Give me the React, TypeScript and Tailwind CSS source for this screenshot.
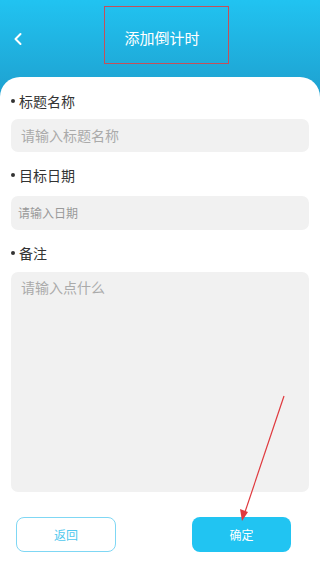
import { ChevronLeft } from 'lucide-react';

const font = { fontFamily: '"Noto Sans CJK SC", "Noto Sans", sans-serif' };

function Label({ text }: { text: string }) {
  return (
    <div className="flex items-center text-[14px] leading-5 text-[#333]">
      <span className="w-[4px] h-[4px] rounded-full bg-[#333] mr-[4px]" />
      {text}
    </div>
  );
}

export default function App() {
  return (
    <div className="relative w-[320px] h-[568px] bg-white overflow-hidden" style={font}>
      {/* header */}
      <div className="h-[100px] bg-gradient-to-b from-[#21c3f1] to-[#1e9fce]">
        <div className="relative flex items-center justify-center h-[80px] pb-[3px]">
          <ChevronLeft className="absolute left-[8px] top-[29px] w-[20px] h-[20px] text-white" strokeWidth={2.4} />
          <span className="text-white text-[15px] pl-[4px]">添加倒计时</span>
        </div>
      </div>

      {/* card */}
      <div className="absolute left-0 right-0 top-[77px] bottom-0 bg-white rounded-t-[20px] px-[11px] pt-[14px]">
        <Label text="标题名称" />
        <div className="mt-[8px] h-[33px] rounded-[7px] bg-[#f1f1f1] flex items-center px-[10px] text-[14px] text-[#aaa]">
          请输入标题名称
        </div>

        <div className="mt-[13px]">
          <Label text="目标日期" />
        </div>
        <div className="mt-[11px] h-[34px] rounded-[7px] bg-[#f1f1f1] flex items-center px-[7px] text-[12px] text-[#999]">
          请输入日期
        </div>

        <div className="mt-[13px]">
          <Label text="备注" />
        </div>
        <div className="mt-[9px] h-[220px] rounded-[7px] bg-[#f1f1f1] px-[10px] pt-[5px] text-[14px] text-[#aaa]">
          请输入点什么
        </div>

        <div className="mt-[25px] flex justify-between pl-[5px] pr-[18px]">
          <button className="w-[100px] h-[35px] rounded-[8px] border border-[#7fd7f4] text-[#50c8ee] text-[12px]">
            返回
          </button>
          <button className="w-[99px] h-[35px] rounded-[8px] bg-[#21c4f2] text-white text-[12px]">
            确定
          </button>
        </div>
      </div>

      {/* annotations */}
      <div className="absolute left-[104px] top-[6px] w-[125px] h-[58px] border border-[#c4505a]" />
      <svg className="absolute left-0 top-0" width="320" height="568" viewBox="0 0 320 568">
        <line x1="284" y1="396" x2="245" y2="512" stroke="#e0393e" strokeWidth="1.2" />
        <polygon points="242,521 240,509 248,512" fill="#e0393e" />
      </svg>
    </div>
  );
}
